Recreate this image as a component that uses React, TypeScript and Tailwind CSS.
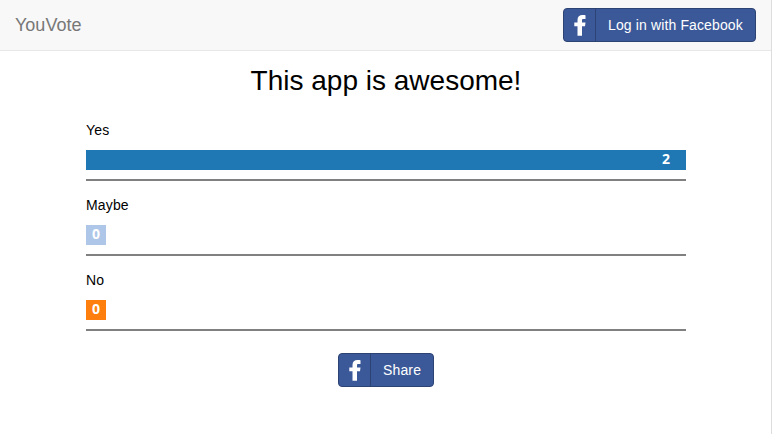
import React from "react";

type FacebookButtonProps = { label: string; className: string };

function FacebookButton({ label, className }: FacebookButtonProps) {
  return (
    <button
      className={`flex h-[34px] items-stretch overflow-hidden rounded-[4px] border border-[#2d4373] bg-[#3b5998] text-white ${className}`}
    >
      <span className="flex w-8 shrink-0 items-center justify-center border-r border-[#2d4373]">
        <svg width="12" height="21" viewBox="0 0 12 21" fill="currentColor" aria-hidden="true">
          <path d="M11.5 0.2V4H9.5C8.3 4 8 4.5 8 5.4V7.6H11.5L11 11.2H8V20.8H3.5V11.2H0.3V7.6H3.5V5C3.5 1.8 5.4 0 8.5 0C9.9 0 11.2 0.1 11.5 0.2Z" />
        </svg>
      </span>
      <span className="grow pl-3 text-left text-[14px] leading-8 whitespace-nowrap">{label}</span>
    </button>
  );
}

const options = [
  { label: "Yes", votes: 2, bar: "w-full bg-[#1f77b4] pr-4" },
  { label: "Maybe", votes: 0, bar: "w-5 bg-[#aec7e8] pr-1.5" },
  { label: "No", votes: 0, bar: "w-5 bg-[#ff7f0e] pr-1.5" },
];

export default function App() {
  return (
    <div className="flex h-[434px] w-[772px] flex-col border-r border-[#dddddd] bg-white font-['Liberation_Sans',Arial,sans-serif] text-black">
      <nav className="flex h-[51px] shrink-0 items-start justify-between border-b border-[#e7e7e7] bg-[#f8f8f8] pr-[15px] pl-[15px]">
        <span className="pt-[15px] text-[18px] leading-5 text-[#777777]">YouVote</span>
        <FacebookButton label="Log in with Facebook" className="mt-2 w-[193px] tracking-[0.13px]" />
      </nav>
      <main className="flex flex-col items-center pl-px">
        <h1 className="mt-3.5 text-[28px] leading-8">This app is awesome!</h1>
        <section className="mt-[23px] w-[600px]">
          {options.map((o) => (
            <div key={o.label} className="mb-3.5 h-[61px] border-b-2 border-[#808080]">
              <p className="text-[14px] leading-5 tracking-[0.15px]">{o.label}</p>
              <div
                className={`mt-2.5 h-5 text-right font-['Open_Sans',sans-serif] text-[14px] leading-[18px] font-bold text-white ${o.bar}`}
              >
                {o.votes}
              </div>
            </div>
          ))}
        </section>
        <FacebookButton label="Share" className="mt-2 w-24 tracking-[0.15px]" />
      </main>
    </div>
  );
}
